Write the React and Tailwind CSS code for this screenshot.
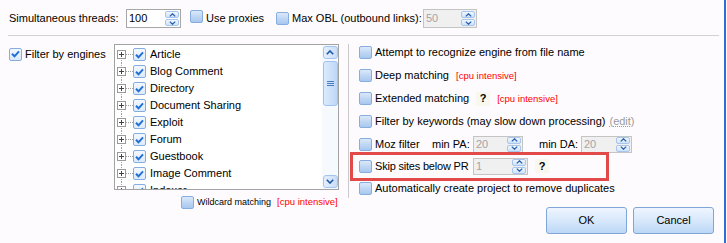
import React from 'react'

const engines = ['Article', 'Blog Comment', 'Directory', 'Document Sharing', 'Exploit', 'Forum', 'Guestbook', 'Image Comment', 'Indexer']

function Box({ checked }) {
  return (
    <span className={`inline-flex h-[13px] w-[13px] shrink-0 items-center justify-center rounded-[2px] border border-[#86ade0] ${checked ? 'bg-[linear-gradient(180deg,#f3f8fe_0%,#dceafb_100%)]' : 'bg-[linear-gradient(180deg,#dce9fa_0%,#bdd5f3_55%,#a9c8ee_100%)]'}`}>
      {checked && (
        <svg width="9" height="8" viewBox="0 0 9 8">
          <path d="M1 3.8 L3.5 6.3 L8 1.3" fill="none" stroke="#1f6fd6" strokeWidth="2" />
        </svg>
      )}
    </span>
  )
}

function Arrow({ up }) {
  return (
    <svg width="7" height="4" viewBox="0 0 7 4">
      <path d={up ? 'M0.8 3.4 L3.5 0.8 L6.2 3.4' : 'M0.8 0.6 L3.5 3.2 L6.2 0.6'} fill="none" stroke="#2b5fae" strokeWidth="1.3" />
    </svg>
  )
}

function SpinBtns() {
  return (
    <div className="mr-[1px] flex flex-col gap-[1px]">
      <span className="flex h-[7px] w-[14px] items-center justify-center rounded-[2px] border border-[#a8c6ec] bg-[linear-gradient(180deg,#f1f7fe,#cfe2f8)]"><Arrow up /></span>
      <span className="flex h-[7px] w-[14px] items-center justify-center rounded-[2px] border border-[#a8c6ec] bg-[linear-gradient(180deg,#f1f7fe,#cfe2f8)]"><Arrow /></span>
    </div>
  )
}

function Spin({ value, className, disabled }) {
  return (
    <div className={`flex items-center border ${disabled ? 'border-[#c4c4c4] bg-[#f1f0f1] text-[#a4a4a4]' : 'border-[#a7a7a7] bg-white'} ${className}`}>
      <span className="flex-1 pl-[2px]">{value}</span>
      <SpinBtns />
    </div>
  )
}

function PlusBox() {
  return (
    <span className="relative flex h-[9px] w-[9px] items-center justify-center border border-[#9a9a9a] bg-white">
      <svg width="5" height="5" viewBox="0 0 5 5">
        <path d="M0 2.5 H5 M2.5 0 V5" stroke="#444" strokeWidth="1" />
      </svg>
    </span>
  )
}

function ScrollBtn({ up }) {
  return (
    <span className="flex h-[13px] w-[15px] items-center justify-center rounded-[3px] border border-[#a3c4ec] bg-[linear-gradient(90deg,#e4effc,#c8ddf7)]">
      <svg width="8" height="5" viewBox="0 0 8 5">
        <path d={up ? 'M0.8 4.2 L4 1 L7.2 4.2' : 'M0.8 0.8 L4 4 L7.2 0.8'} fill="none" stroke="#1d55a8" strokeWidth="1.6" />
      </svg>
    </span>
  )
}

function Cpu() {
  return <span className="text-[9.5px] text-[#ff0000]">[cpu intensive]</span>
}

function Q() {
  return <span className="inline-flex h-[14px] w-[14px] items-center justify-center bg-[#f9f8ee] font-bold">?</span>
}

function Btn({ children }) {
  return (
    <button className="flex h-[27px] w-[81px] items-center justify-center rounded-[3px] border border-[#7fa6d6] bg-[linear-gradient(180deg,#eef5fe_0%,#d8e8fb_50%,#bcd7f6_100%)]">
      {children}
    </button>
  )
}

export default function App() {
  return (
    <div className="relative flex h-[243px] w-[727px] overflow-hidden bg-[#fdfbfd] font-['Liberation_Sans',Arial,sans-serif] text-[11px] text-black">
      <div className="w-[724px]">
        {/* top row */}
        <div className="flex h-[35px] items-start pl-[9px] pt-[9px]">
          <div className="flex h-[19px] items-center">
            <span className="w-[117px]">Simultaneous threads:</span>
            <Spin value="100" className="h-[19px] w-[55px]" />
            <span className="ml-[9px]"><Box /></span>
            <span className="ml-[3px] w-[70px]">Use proxies</span>
            <Box />
            <span className="ml-[3px] w-[131px]">Max OBL (outbound links):</span>
            <Spin value="50" disabled className="h-[19px] w-[54px]" />
          </div>
        </div>
        <div className="ml-[8px] h-px w-[711px] bg-[#d2d0d3]" />

        <div className="flex">
          {/* filter by engines */}
          <div className="w-[114px] pl-[9px] pt-[10px]">
            <div className="flex items-center">
              <Box checked />
              <span className="ml-[3px]">Filter by engines</span>
            </div>
          </div>

          {/* engine list */}
          <div className="w-[225px] pt-[8px]">
            <div className="flex h-[146px] border border-[#a3a3a3] bg-white">
              <div className="flex-1 overflow-hidden pl-[2px] pt-[1px]">
                {engines.map((name, i) => (
                  <div key={name} className="flex h-[17px] items-center">
                    <div className="relative flex h-full w-[9px] items-center justify-center">
                      <span className={`absolute left-[4px] ${i === 0 ? 'top-[8px]' : 'top-0'} bottom-0 border-l border-dotted border-[#a0a0a0]`} />
                      <PlusBox />
                    </div>
                    <span className="w-[7px] border-t border-dotted border-[#a0a0a0]" />
                    <Box checked />
                    <span className="ml-[4px] whitespace-nowrap">{name}</span>
                  </div>
                ))}
              </div>
              <div className="flex w-[16px] flex-col items-center bg-[#f6f9fd] py-[1px]">
                <ScrollBtn up />
                <span className="mt-[2px] flex h-[45px] w-[15px] items-center justify-center rounded-[3px] border border-[#9fc3ec] bg-[linear-gradient(90deg,#dcebfc,#bcd7f6)]">
                  <span className="flex flex-col gap-[1px]">
                    <span className="h-px w-[7px] bg-[#4a7cc4]" />
                    <span className="h-px w-[7px] bg-[#4a7cc4]" />
                    <span className="h-px w-[7px] bg-[#4a7cc4]" />
                  </span>
                </span>
                <div className="flex-1" />
                <ScrollBtn />
              </div>
            </div>
            <div className="mt-[5px] flex items-center pl-[67px] text-[9px]">
              <Box />
              <span className="ml-[3px]">Wildcard matching</span>
              <span className="ml-[6px]"><Cpu /></span>
            </div>
          </div>

          <div className="ml-[9px] mt-[8px] h-[154px] w-px bg-[#cacaca]" />

          {/* options */}
          <div className="flex flex-1 flex-col pl-[10px] pt-[5px]">
            <div className="flex h-[23px] items-center">
              <Box />
              <span className="ml-[3px]">Attempt to recognize engine from file name</span>
            </div>
            <div className="flex h-[23px] items-center">
              <Box />
              <span className="ml-[3px]">Deep matching</span>
              <span className="ml-[7px]"><Cpu /></span>
            </div>
            <div className="flex h-[23px] items-center">
              <Box />
              <span className="ml-[3px]">Extended matching</span>
              <span className="ml-[7px]"><Q /></span>
              <span className="ml-[7px]"><Cpu /></span>
            </div>
            <div className="flex h-[23px] items-center">
              <Box />
              <span className="ml-[3px]">Filter by keywords (may slow down processing)</span>
              <span className="ml-[4px] text-[#9b9b9b] underline decoration-dotted">(edit)</span>
            </div>
            <div className="flex h-[22px] items-center">
              <Box />
              <span className="ml-[3px] w-[57px]">Moz filter</span>
              <span className="w-[41px]">min PA:</span>
              <Spin value="20" disabled className="h-[17px] w-[50px]" />
              <span className="ml-[16px] w-[42px]">min DA:</span>
              <Spin value="20" disabled className="h-[17px] w-[51px]" />
            </div>
            <div className="flex h-[22px] items-center">
              <Box />
              <span className="ml-[3px] w-[98px] tracking-[-0.2px]">Skip sites below PR</span>
              <Spin value="1" disabled className="h-[17px] w-[55px]" />
              <span className="ml-[7px]"><Q /></span>
            </div>
            <div className="flex h-[22px] items-center">
              <Box />
              <span className="ml-[3px]">Automatically create project to remove duplicates</span>
            </div>
            <div className="mt-[8px] flex justify-end gap-[6px] pr-[10px]">
              <Btn>OK</Btn>
              <Btn>Cancel</Btn>
            </div>
          </div>
        </div>
      </div>
      <div className="w-[2px] bg-[#2d6fd5]" />

      {/* highlight annotation */}
      <div className="absolute left-[350px] top-[152px] h-[29px] w-[259px] border-[3px] border-[#e24a4a]" />
    </div>
  )
}
